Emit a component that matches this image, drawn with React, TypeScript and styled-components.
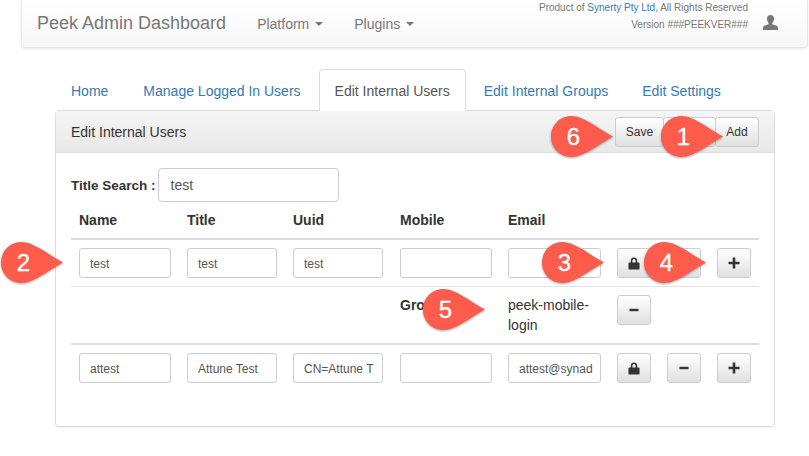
import React from "react";
import styled, { createGlobalStyle } from "styled-components";

const Global = createGlobalStyle`
  html, body { margin: 0; padding: 0; background: #fff; }
  body { font-family: "Liberation Sans", Arial, sans-serif; color: #333; font-size: 14px; }
  * { box-sizing: border-box; }
`;
const Page = styled.div`
  position: relative;
  width: 809px;
  height: 456px;
  overflow: hidden;
`;
const Navbar = styled.header`
  height: 48px;
  margin: 0 1px 0 21px;
  padding: 0 29px 0 15px;
  display: flex;
  align-items: center;
  background: linear-gradient(#fff, #f7f7f7);
  border: 1px solid #e7e7e7;
  border-top: none;
  border-radius: 0 0 4px 4px;
  box-shadow: 0 1px 3px rgba(0, 0, 0, 0.08);
`;
const Brand = styled.div`
  font-size: 18px;
  color: #777;
  margin-right: 31px;
  white-space: nowrap;
`;
const NavItem = styled.div`
  display: flex;
  align-items: center;
  gap: 6px;
  font-size: 14px;
  color: #777;
  margin-right: 31px;
`;
const Caret = styled.span`
  width: 0;
  height: 0;
  border-left: 4px solid transparent;
  border-right: 4px solid transparent;
  border-top: 4px solid #777;
`;
const NavRight = styled.div`
  margin-left: auto;
  display: flex;
  align-items: flex-start;
  align-self: flex-start;
`;
const Credits = styled.div`
  font-size: 10px;
  line-height: 17px;
  color: #777;
  text-align: right;
  margin-top: -1px;
`;
const CreditLine = styled.div`
  height: 17px;
  white-space: nowrap;
`;
const Link = styled.span`
  color: #337ab7;
`;
const UserIcon = styled.svg`
  width: 15px;
  height: 15px;
  margin: 15px 0 0 15px;
  fill: #777;
`;
const Main = styled.main`
  margin: 21px 0 0 55px;
  width: 720px;
`;
const Tabs = styled.nav`
  display: flex;
  height: 42px;
  margin-bottom: -1px;
  position: relative;
  z-index: 1;
`;
const Tab = styled.div<{ $active?: boolean }>`
  padding: 13px 15px 0;
  height: 42px;
  font-size: 14px;
  margin-right: 2px;
  white-space: nowrap;
  color: ${(p) => (p.$active ? "#555" : "#337ab7")};
  background: ${(p) => (p.$active ? "#fff" : "transparent")};
  border: 1px solid ${(p) => (p.$active ? "#ddd" : "transparent")};
  border-bottom: none;
  border-radius: 4px 4px 0 0;
  &:first-child {
    margin-right: 3px;
  }
`;
const Panel = styled.section`
  height: 317px;
  border: 1px solid #ddd;
  border-radius: 4px;
  box-shadow: 0 1px 1px rgba(0, 0, 0, 0.05);
  background: #fff;
`;
const PanelHead = styled.div`
  height: 42px;
  padding: 0 15px;
  display: flex;
  align-items: center;
  justify-content: space-between;
  background: linear-gradient(#f5f5f5, #e8e8e8);
  border-bottom: 1px solid #ddd;
  font-size: 14px;
  color: #333;
`;
const BtnGroup = styled.div`
  display: flex;
`;
const HeadBtn = styled.div<{ $w: number }>`
  width: ${(p) => p.$w}px;
  height: 30px;
  margin-left: -1px;
  display: flex;
  align-items: center;
  justify-content: center;
  font-size: 12px;
  color: #333;
  background: linear-gradient(#fff, #e0e0e0);
  border: 1px solid #ccc;
  border-radius: 3px;
`;
const PanelBody = styled.div`
  padding: 15px 15px 0;
`;
const SearchRow = styled.div`
  display: flex;
  align-items: center;
  gap: 2px;
  font-weight: bold;
  font-size: 13.5px;
`;
const SearchInput = styled.div`
  width: 181px;
  height: 34px;
  padding: 0 12px;
  display: flex;
  align-items: center;
  border: 1px solid #ccc;
  border-radius: 4px;
  font-weight: normal;
  font-size: 14px;
  color: #555;
`;
const columns = "108px 106px 107px 108px 109px 50px 50px 50px";
const HeadRow = styled.div`
  display: grid;
  grid-template-columns: ${columns};
  height: 38px;
  padding-top: 9px;
  border-bottom: 2px solid #ddd;
  font-weight: bold;
  font-size: 14px;
  line-height: 18px;
`;
const Row = styled.div<{ $thick?: boolean }>`
  display: grid;
  grid-template-columns: ${columns};
  padding: 8px 0;
  align-items: start;
  border-bottom: ${(p) => (p.$thick ? "2px" : "1px")} solid ${(p) => (p.$thick ? "#ddd" : "#e3e3e3")};
`;
const LastRow = styled(Row)`
  border-bottom: none;
`;
const Cell = styled.div`
  padding-left: 8px;
`;
const Label = styled(Cell)`
  font-weight: bold;
  font-size: 14px;
  line-height: 20px;
`;
const Text = styled(Cell)`
  font-size: 14px;
  line-height: 20px;
  padding-right: 8px;
`;
const Field = styled.div<{ $w: number }>`
  width: ${(p) => p.$w}px;
  height: 30px;
  padding: 1px 10px 0;
  display: flex;
  align-items: center;
  overflow: hidden;
  white-space: nowrap;
  border: 1px solid #ccc;
  border-radius: 3px;
  font-size: 12px;
  color: #555;
`;
const IconBtn = styled.div`
  width: 34px;
  height: 30px;
  display: flex;
  align-items: center;
  justify-content: center;
  background: linear-gradient(#fff, #e0e0e0);
  border: 1px solid #ccc;
  border-radius: 3px;
`;
const Glyph = styled.svg`
  width: 12px;
  height: 12px;
  fill: #333;
`;
const LockGlyph = styled(Glyph)`
  width: 12px;
  height: 13px;
`;
const PinWrap = styled.div<{ $x: number; $y: number }>`
  position: absolute;
  left: ${(p) => p.$x}px;
  top: ${(p) => p.$y}px;
  width: 62px;
  height: 41px;
`;
const PinShape = styled.svg`
  display: block;
  width: 62px;
  height: 41px;
  fill: #fd5c4d;
  overflow: visible;
  filter: drop-shadow(0 1px 1px rgba(0, 0, 0, 0.35));
`;
const PinNum = styled.span`
  position: absolute;
  left: 0;
  top: 0;
  width: 45px;
  line-height: 41px;
  text-align: center;
  font-size: 24px;
  color: #fff;
  -webkit-text-stroke: 0.3px #fff;
`;

const Pin = ({ x, y, n }: { x: number; y: number; n: number }) => (
  <PinWrap $x={x} $y={y}>
    <PinShape viewBox="0 0 62 41">
      <path d="M20.5 0C33 0 48 13 62 20.5C48 28 33 41 20.5 41C9 41 0 32 0 20.5C0 9 9 0 20.5 0Z" />
    </PinShape>
    <PinNum>{n}</PinNum>
  </PinWrap>
);
const Lock = () => (
  <LockGlyph viewBox="0 0 13 14">
    <path d="M3 6V4C3 1.7 4.4.4 6.5.4S10 1.7 10 4V6H11.5C12.1 6 12.5 6.4 12.5 7V12.6C12.5 13.2 12.1 13.6 11.5 13.6H1.5C.9 13.6.5 13.2.5 12.6V7C.5 6.4.9 6 1.5 6ZM4.8 6H8.2V4C8.2 2.8 7.5 2.1 6.5 2.1S4.8 2.8 4.8 4Z" />
  </LockGlyph>
);
const Plus = () => (
  <Glyph viewBox="0 0 12 12">
    <path d="M4.7 .5H7.3V4.7H11.5V7.3H7.3V11.5H4.7V7.3H.5V4.7H4.7Z" />
  </Glyph>
);
const Minus = () => (
  <Glyph viewBox="0 0 12 12">
    <path d="M1.5 4.8H10.5V7.2H1.5Z" />
  </Glyph>
);

const widths = [92, 90, 90, 92, 93];

const UserRow = ({ values, thick }: { values: string[]; thick?: boolean }) => {
  const R = thick === undefined ? LastRow : Row;
  return (
    <R>
      {values.map((v, i) => (
        <Cell key={i}>
          <Field $w={widths[i]}>{v}</Field>
        </Cell>
      ))}
      <Cell><IconBtn><Lock /></IconBtn></Cell>
      <Cell><IconBtn><Minus /></IconBtn></Cell>
      <Cell><IconBtn><Plus /></IconBtn></Cell>
    </R>
  );
};

export default function App() {
  return (
    <Page>
      <Global />
      <Navbar>
        <Brand>Peek Admin Dashboard</Brand>
        <NavItem>Platform <Caret /></NavItem>
        <NavItem>Plugins <Caret /></NavItem>
        <NavRight>
          <Credits>
            <CreditLine>Product of <Link>Synerty Pty Ltd,</Link> All Rights Reserved</CreditLine>
            <CreditLine>Version ###PEEKVER###</CreditLine>
          </Credits>
          <UserIcon viewBox="0 0 15 15">
            <path d="M7.5 0C9.7 0 11 1.6 11 3.8C11 5.5 10.3 7 9.4 8V9.3C11 10 13.8 10.6 14.6 11.6C15 12.2 15 13.6 15 15H0C0 13.6 0 12.2.4 11.6C1.2 10.6 4 10 5.6 9.3V8C4.7 7 4 5.5 4 3.8C4 1.6 5.3 0 7.5 0Z" />
          </UserIcon>
        </NavRight>
      </Navbar>
      <Main>
        <Tabs>
          <Tab>Home</Tab>
          <Tab>Manage Logged In Users</Tab>
          <Tab $active>Edit Internal Users</Tab>
          <Tab>Edit Internal Groups</Tab>
          <Tab>Edit Settings</Tab>
        </Tabs>
        <Panel>
          <PanelHead>
            Edit Internal Users
            <BtnGroup>
              <HeadBtn $w={49}>Save</HeadBtn>
              <HeadBtn $w={53} />
              <HeadBtn $w={44}>Add</HeadBtn>
            </BtnGroup>
          </PanelHead>
          <PanelBody>
            <SearchRow>
              Title Search :
              <SearchInput>test</SearchInput>
            </SearchRow>
            <HeadRow>
              <Cell>Name</Cell>
              <Cell>Title</Cell>
              <Cell>Uuid</Cell>
              <Cell>Mobile</Cell>
              <Cell>Email</Cell>
            </HeadRow>
            <UserRow values={["test", "test", "test", "", ""]} thick={false} />
            <Row $thick>
              <Cell /><Cell /><Cell />
              <Label>Groups</Label>
              <Text>peek-mobile-login</Text>
              <Cell><IconBtn><Minus /></IconBtn></Cell>
            </Row>
            <UserRow values={["attest", "Attune Test", "CN=Attune T", "", "attest@synad"]} />
          </PanelBody>
        </Panel>
      </Main>
      <Pin x={661} y={116} n={1} />
      <Pin x={551} y={116} n={6} />
      <Pin x={1} y={242} n={2} />
      <Pin x={542} y={242} n={3} />
      <Pin x={644} y={242} n={4} />
      <Pin x={423} y={289} n={5} />
    </Page>
  );
}
